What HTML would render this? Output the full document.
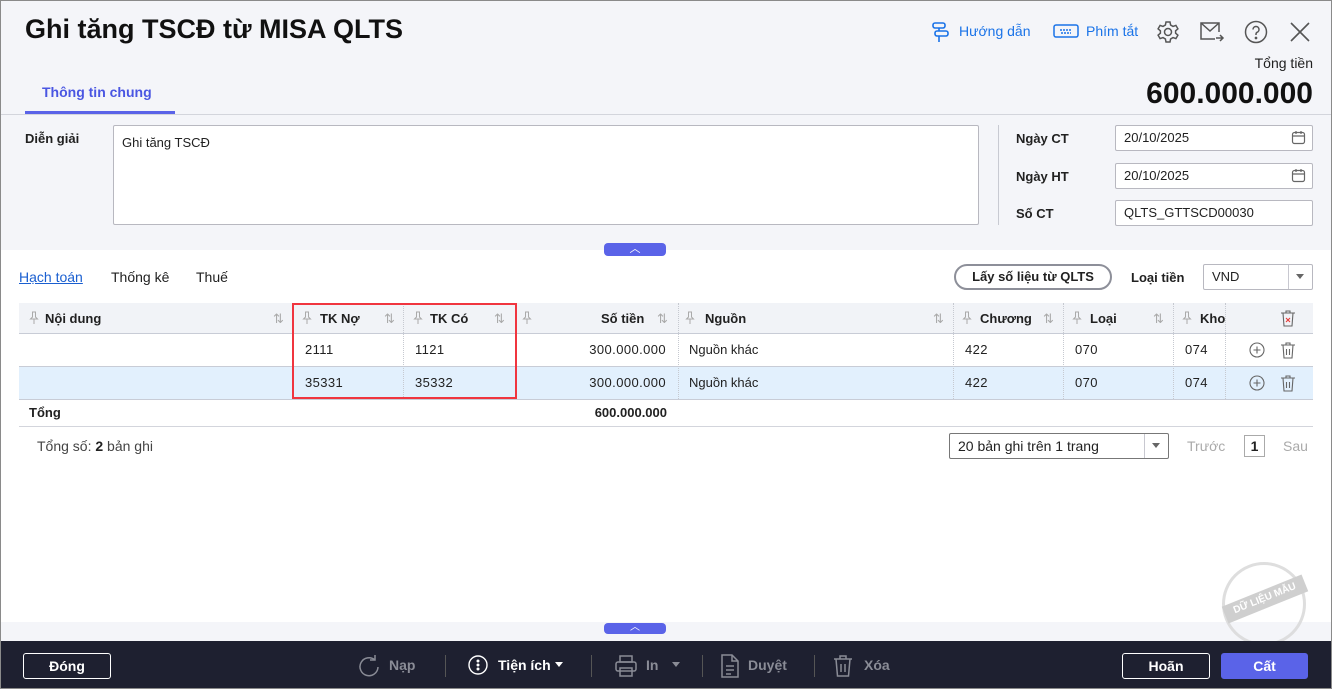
<!DOCTYPE html>
<html><head><meta charset="utf-8"><style>
*{box-sizing:border-box;margin:0;padding:0}
body{width:1332px;height:689px;overflow:hidden;font-family:"Liberation Sans",sans-serif;font-size:13px;color:#212121;background:#fff;position:relative}
.abs{position:absolute}
.frame{position:absolute;left:0;top:0;width:1332px;height:689px;border:1px solid #8a8a8a;pointer-events:none}
.hdr{left:0;top:0;width:1332px;height:250px;background:#f4f5f9}
.title{left:25px;top:14px;font-size:27px;font-weight:bold;color:#111}
.lnk{color:#1a73e8;font-size:14px}
.inp{background:#fff;border:1px solid #b8b8c0;border-radius:2px;font-size:13px;padding:0 8px}
.lbl{font-weight:bold;font-size:13px}
.th{top:303px;height:31px;background:#f1f3f7;border-bottom:1px solid #c8ccd6;font-weight:bold;font-size:13px;line-height:31px}
.cell{position:absolute;font-size:13px;line-height:32px}
.vl{position:absolute;width:0;border-left:1px dotted #c6c9d0}
.ft{left:0;top:641px;width:1332px;height:48px;background:#1e2030;color:#fff}
.btn{position:absolute;border:1px solid #fff;border-radius:3px;font-weight:bold;font-size:14px;text-align:center;line-height:24px;color:#fff}
.gray{color:#8a8c96}
.pin{position:absolute;top:311px}
</style></head><body>
<div class="abs hdr"></div>
<div class="abs title">Ghi tăng TSCĐ từ MISA QLTS</div>
<svg class="abs" style="left:930px;top:21px" width="20" height="22" viewBox="0 0 20 22" fill="none" stroke="#1a73e8" stroke-width="1.6"><rect x="3" y="2" width="12" height="5" rx="2"/><rect x="5" y="10" width="13" height="5" rx="2"/><path d="M9 7v3M9 15v6"/></svg>
<div class="abs lnk" style="left:959px;top:23px">Hướng dẫn</div>
<svg class="abs" style="left:1053px;top:24px" width="26" height="14" viewBox="0 0 26 14" fill="none" stroke="#1a73e8" stroke-width="1.5"><rect x="1" y="1" width="24" height="12" rx="2"/><path d="M7 6h12M8 9h10" stroke-dasharray="2 1"/></svg>
<div class="abs lnk" style="left:1086px;top:23px">Phím tắt</div>
<svg class="abs" style="left:1156px;top:20px" width="24" height="24" viewBox="0 0 24 24" fill="none" stroke="#555" stroke-width="1.5"><circle cx="12" cy="12" r="3.5"/><path d="M10 2h4l.6 3 2.4 1.4 2.9-1 2 3.4-2.3 2v2.4l2.3 2-2 3.4-2.9-1-2.4 1.4-.6 3h-4l-.6-3-2.4-1.4-2.9 1-2-3.4 2.3-2v-2.4l-2.3-2 2-3.4 2.9 1L9.4 5z"/></svg>
<svg class="abs" style="left:1199px;top:20px" width="26" height="24" viewBox="0 0 26 24" fill="none" stroke="#555" stroke-width="1.5"><path d="M20 12V3H2v16h14"/><path d="M2 3l9 8 9-8"/><path d="M17 18h7M21 15l3 3-3 3"/></svg>
<svg class="abs" style="left:1244px;top:20px" width="24" height="24" viewBox="0 0 24 24" fill="none" stroke="#555" stroke-width="1.5"><circle cx="12" cy="12" r="10.5"/><path d="M9 9.5a3 3 0 1 1 4 2.8c-.7.4-1 1-1 1.7v1"/><circle cx="12" cy="18" r=".6" fill="#555"/></svg>
<svg class="abs" style="left:1289px;top:21px" width="22" height="22" viewBox="0 0 22 22" stroke="#555" stroke-width="1.6"><path d="M2 2l18 18M20 2L2 20"/></svg>
<div class="abs" style="right:19px;top:55px;font-size:14px">Tổng tiền</div>
<div class="abs" style="right:19px;top:77px;font-size:30px;font-weight:bold;color:#111">600.000.000</div>
<div class="abs" style="left:42px;top:84px;font-size:14px;color:#4a56e2;font-weight:bold">Thông tin chung</div>
<div class="abs" style="left:25px;top:111px;width:150px;height:3px;background:#5a63e8"></div>
<div class="abs" style="left:0;top:114px;width:1332px;border-top:1px solid #d3d5dc"></div>
<div class="abs lbl" style="left:25px;top:131px">Diễn giải</div>
<div class="abs inp" style="left:113px;top:125px;width:866px;height:100px;padding-top:9px">Ghi tăng TSCĐ</div>
<div class="abs" style="left:998px;top:125px;height:100px;border-left:1px solid #c8cad2"></div>
<div class="abs lbl" style="left:1016px;top:131px">Ngày CT</div>
<div class="abs lbl" style="left:1016px;top:169px">Ngày HT</div>
<div class="abs lbl" style="left:1016px;top:206px">Số CT</div>
<div class="abs inp" style="left:1115px;top:125px;width:198px;height:26px;line-height:24px">20/10/2025</div>
<div class="abs inp" style="left:1115px;top:163px;width:198px;height:26px;line-height:24px">20/10/2025</div>
<div class="abs inp" style="left:1115px;top:200px;width:198px;height:26px;line-height:24px">QLTS_GTTSCD00030</div>
<svg class="abs" style="left:1291px;top:130px" width="15" height="15" viewBox="0 0 15 15" fill="none" stroke="#666" stroke-width="1.2"><rect x="1.5" y="2.5" width="12" height="11" rx="2"/><path d="M1.5 6h12M5 1v3M10 1v3"/></svg>
<svg class="abs" style="left:1291px;top:168px" width="15" height="15" viewBox="0 0 15 15" fill="none" stroke="#666" stroke-width="1.2"><rect x="1.5" y="2.5" width="12" height="11" rx="2"/><path d="M1.5 6h12M5 1v3M10 1v3"/></svg>
<div class="abs" style="left:604px;top:243px;width:62px;height:13px;background:#5a63e8;border-radius:4px;color:#fff;text-align:center;font-size:11px;line-height:12px">︿</div>

<div class="abs" style="left:19px;top:269px;font-size:14px;color:#1a5fd0;text-decoration:underline">Hạch toán</div>
<div class="abs" style="left:111px;top:269px;font-size:14px">Thống kê</div>
<div class="abs" style="left:196px;top:269px;font-size:14px">Thuế</div>
<div class="abs" style="left:954px;top:264px;width:158px;height:26px;border:2px solid #8d8f99;border-radius:14px;text-align:center;line-height:22px;font-weight:bold;font-size:13px">Lấy số liệu từ QLTS</div>
<div class="abs lbl" style="left:1131px;top:270px">Loại tiền</div>
<div class="abs inp" style="left:1203px;top:264px;width:110px;height:26px;line-height:24px">VND</div>
<div class="abs" style="left:1288px;top:265px;height:24px;border-left:1px solid #c8c8d0"></div>
<div class="abs" style="left:1296px;top:274px;border:4px solid transparent;border-top:5px solid #666"></div>

<div class="abs th" style="left:19px;width:1294px"></div>
<div class="abs" style="left:19px;top:367px;width:1294px;height:33px;background:#e2f0fd"></div>
<div class="abs" style="left:19px;top:366px;width:1294px;border-top:1px solid #c8ccd6"></div>
<div class="abs" style="left:19px;top:399px;width:1294px;border-top:1px solid #c8ccd6"></div>
<div class="abs" style="left:19px;top:426px;width:1294px;border-top:1px solid #d3d5dc"></div>
<div class="vl" style="left:403px;top:303px;height:96px"></div>
<div class="vl" style="left:515px;top:303px;height:96px"></div>
<div class="vl" style="left:678px;top:303px;height:96px"></div>
<div class="vl" style="left:953px;top:303px;height:96px"></div>
<div class="vl" style="left:1063px;top:303px;height:96px"></div>
<div class="vl" style="left:1173px;top:303px;height:96px"></div>
<div class="vl" style="left:1225px;top:303px;height:96px"></div>
<div class="abs" style="left:292px;top:303px;width:225px;height:96px;border:2px solid #f0353f"></div>
<svg class="pin" style="left:29px" width="10" height="14" viewBox="0 0 10 14" fill="none" stroke="#aaa" stroke-width="1"><path d="M3 1h4M3.5 1v5L1.5 8h7L6.5 6V1M5 8v5"/></svg>
<svg class="pin" style="left:302px" width="10" height="14" viewBox="0 0 10 14" fill="none" stroke="#aaa" stroke-width="1"><path d="M3 1h4M3.5 1v5L1.5 8h7L6.5 6V1M5 8v5"/></svg>
<svg class="pin" style="left:413px" width="10" height="14" viewBox="0 0 10 14" fill="none" stroke="#aaa" stroke-width="1"><path d="M3 1h4M3.5 1v5L1.5 8h7L6.5 6V1M5 8v5"/></svg>
<svg class="pin" style="left:522px" width="10" height="14" viewBox="0 0 10 14" fill="none" stroke="#aaa" stroke-width="1"><path d="M3 1h4M3.5 1v5L1.5 8h7L6.5 6V1M5 8v5"/></svg>
<svg class="pin" style="left:685px" width="10" height="14" viewBox="0 0 10 14" fill="none" stroke="#aaa" stroke-width="1"><path d="M3 1h4M3.5 1v5L1.5 8h7L6.5 6V1M5 8v5"/></svg>
<svg class="pin" style="left:962px" width="10" height="14" viewBox="0 0 10 14" fill="none" stroke="#aaa" stroke-width="1"><path d="M3 1h4M3.5 1v5L1.5 8h7L6.5 6V1M5 8v5"/></svg>
<svg class="pin" style="left:1072px" width="10" height="14" viewBox="0 0 10 14" fill="none" stroke="#aaa" stroke-width="1"><path d="M3 1h4M3.5 1v5L1.5 8h7L6.5 6V1M5 8v5"/></svg>
<svg class="pin" style="left:1182px" width="10" height="14" viewBox="0 0 10 14" fill="none" stroke="#aaa" stroke-width="1"><path d="M3 1h4M3.5 1v5L1.5 8h7L6.5 6V1M5 8v5"/></svg>
<div class="cell" style="left:45px;top:303px;font-weight:bold;line-height:31px">Nội dung</div>
<div class="cell" style="left:273px;top:303px;color:#aaa;line-height:31px">⇅</div>
<div class="cell" style="left:320px;top:303px;font-weight:bold;line-height:31px">TK Nợ</div>
<div class="cell" style="left:384px;top:303px;color:#aaa;line-height:31px">⇅</div>
<div class="cell" style="left:430px;top:303px;font-weight:bold;line-height:31px">TK Có</div>
<div class="cell" style="left:494px;top:303px;color:#aaa;line-height:31px">⇅</div>
<div class="cell" style="left:601px;top:303px;font-weight:bold;line-height:31px">Số tiền</div>
<div class="cell" style="left:657px;top:303px;color:#aaa;line-height:31px">⇅</div>
<div class="cell" style="left:705px;top:303px;font-weight:bold;line-height:31px">Nguồn</div>
<div class="cell" style="left:933px;top:303px;color:#aaa;line-height:31px">⇅</div>
<div class="cell" style="left:980px;top:303px;font-weight:bold;line-height:31px">Chương</div>
<div class="cell" style="left:1043px;top:303px;color:#aaa;line-height:31px">⇅</div>
<div class="cell" style="left:1090px;top:303px;font-weight:bold;line-height:31px">Loại</div>
<div class="cell" style="left:1153px;top:303px;color:#aaa;line-height:31px">⇅</div>
<div class="cell" style="left:1200px;top:303px;font-weight:bold;line-height:31px">Kho</div>
<svg class="abs" style="left:1280px;top:309px" width="16" height="18" viewBox="0 0 16 18" fill="none" stroke="#666" stroke-width="1.1"><path d="M1 4h14M6 4V2h4v2M3 4l1 13h8l1-13"/><path d="M6 9l4 4M10 9l-4 4" stroke="#e53935"/></svg>

<div class="cell" style="left:305px;top:334px;letter-spacing:.4px">2111</div>
<div class="cell" style="left:415px;top:334px;letter-spacing:.4px">1121</div>
<div class="cell" style="right:666px;top:334px;letter-spacing:.4px">300.000.000</div>
<div class="cell" style="left:689px;top:334px">Nguồn khác</div>
<div class="cell" style="left:965px;top:334px;letter-spacing:.4px">422</div>
<div class="cell" style="left:1075px;top:334px;letter-spacing:.4px">070</div>
<div class="cell" style="left:1185px;top:334px;letter-spacing:.4px">074</div>
<div class="cell" style="left:305px;top:367px;letter-spacing:.4px">35331</div>
<div class="cell" style="left:415px;top:367px;letter-spacing:.4px">35332</div>
<div class="cell" style="right:666px;top:367px;letter-spacing:.4px">300.000.000</div>
<div class="cell" style="left:689px;top:367px">Nguồn khác</div>
<div class="cell" style="left:965px;top:367px;letter-spacing:.4px">422</div>
<div class="cell" style="left:1075px;top:367px;letter-spacing:.4px">070</div>
<div class="cell" style="left:1185px;top:367px;letter-spacing:.4px">074</div>
<svg class="abs" style="left:1249px;top:342px" width="16" height="16" viewBox="0 0 16 16" fill="none" stroke="#666" stroke-width="1.1"><circle cx="8" cy="8" r="7"/><path d="M8 4.5v7M4.5 8h7"/></svg>
<svg class="abs" style="left:1249px;top:375px" width="16" height="16" viewBox="0 0 16 16" fill="none" stroke="#666" stroke-width="1.1"><circle cx="8" cy="8" r="7"/><path d="M8 4.5v7M4.5 8h7"/></svg>
<svg class="abs" style="left:1280px;top:341px" width="16" height="18" viewBox="0 0 16 18" fill="none" stroke="#666" stroke-width="1.1"><path d="M1 4h14M6 4V2h4v2M3 4l1 13h8l1-13M6.5 8v6M9.5 8v6"/></svg>
<svg class="abs" style="left:1280px;top:374px" width="16" height="18" viewBox="0 0 16 18" fill="none" stroke="#666" stroke-width="1.1"><path d="M1 4h14M6 4V2h4v2M3 4l1 13h8l1-13M6.5 8v6M9.5 8v6"/></svg>
<div class="cell" style="left:29px;top:399px;font-weight:bold;line-height:28px">Tổng</div>
<div class="cell" style="right:665px;top:399px;font-weight:bold;line-height:28px">600.000.000</div>
<div class="abs" style="left:37px;top:438px;font-size:14px;color:#444">Tổng số: <b style="color:#222">2</b> bản ghi</div>
<div class="abs inp" style="left:949px;top:433px;width:220px;height:26px;line-height:24px;border-color:#777;font-size:14px">20 bản ghi trên 1 trang</div>
<div class="abs" style="left:1144px;top:434px;height:24px;border-left:1px solid #c8c8d0"></div>
<div class="abs" style="left:1152px;top:443px;border:4px solid transparent;border-top:5px solid #666"></div>
<div class="abs" style="left:1187px;top:438px;font-size:14px;color:#aaa">Trước</div>
<div class="abs" style="left:1244px;top:435px;width:21px;height:22px;border:1px solid #aaa;text-align:center;line-height:20px;font-weight:bold;font-size:14px">1</div>
<div class="abs" style="left:1283px;top:438px;font-size:14px;color:#aaa">Sau</div>

<div class="abs" style="left:0;top:622px;width:1332px;height:19px;background:#f4f5f9"></div>
<div class="abs" style="left:604px;top:623px;width:62px;height:11px;background:#5a63e8;border-radius:4px;color:#fff;text-align:center;font-size:10px;line-height:10px">︿</div>
<div class="abs" style="left:1222px;top:562px;width:84px;height:84px;border:3px solid #dadada;border-radius:50%;opacity:.9"></div>
<div class="abs" style="left:1222px;top:590px;width:86px;height:18px;background:#cfcfcf;color:#fff;font-size:10px;font-weight:bold;text-align:center;line-height:18px;transform:rotate(-22deg)">DỮ LIỆU MẪU</div>
<div class="abs ft"></div>
<div class="btn" style="left:23px;top:653px;width:88px;height:26px">Đóng</div>
<svg class="abs" style="left:358px;top:654px" width="22" height="24" viewBox="0 0 22 24" fill="none" stroke="#8a8c96" stroke-width="1.5"><path d="M17 6A9 9 0 1 0 20 13"/><path d="M17 1v5h-5"/></svg>
<div class="abs gray" style="left:389px;top:657px;font-size:14px;font-weight:bold">Nạp</div>
<div class="abs" style="left:445px;top:655px;height:22px;border-left:1px solid #555"></div>
<svg class="abs" style="left:468px;top:655px" width="20" height="20" viewBox="0 0 20 20" fill="none" stroke="#fff" stroke-width="1.4"><circle cx="10" cy="10" r="9"/><circle cx="10" cy="6" r=".8" fill="#fff"/><circle cx="10" cy="10" r=".8" fill="#fff"/><circle cx="10" cy="14" r=".8" fill="#fff"/></svg>
<div class="abs" style="left:498px;top:657px;font-size:14px;font-weight:bold;color:#fff">Tiện ích</div>
<div class="abs" style="left:555px;top:662px;border:4px solid transparent;border-top:5px solid #fff"></div>
<div class="abs" style="left:591px;top:655px;height:22px;border-left:1px solid #555"></div>
<svg class="abs" style="left:615px;top:654px" width="22" height="24" viewBox="0 0 22 24" fill="none" stroke="#8a8c96" stroke-width="1.5"><rect x="5" y="2" width="12" height="6"/><rect x="1" y="8" width="20" height="9" rx="2"/><rect x="5" y="14" width="12" height="8"/></svg>
<div class="abs gray" style="left:646px;top:657px;font-size:14px;font-weight:bold">In</div>
<div class="abs" style="left:672px;top:662px;border:4px solid transparent;border-top:5px solid #8a8c96"></div>
<div class="abs" style="left:702px;top:655px;height:22px;border-left:1px solid #555"></div>
<svg class="abs" style="left:721px;top:654px" width="18" height="24" viewBox="0 0 18 24" fill="none" stroke="#8a8c96" stroke-width="1.5"><path d="M1 1h10l6 6v16H1z"/><path d="M11 1v6h6M5 12h8M5 16h8M5 20h5"/></svg>
<div class="abs gray" style="left:748px;top:657px;font-size:14px;font-weight:bold">Duyệt</div>
<div class="abs" style="left:814px;top:655px;height:22px;border-left:1px solid #555"></div>
<svg class="abs" style="left:833px;top:654px" width="20" height="24" viewBox="0 0 20 24" fill="none" stroke="#8a8c96" stroke-width="1.5"><path d="M1 5h18M7 5V2h6v3M3 5l1.5 17h11L17 5M8 10v8M12 10v8"/></svg>
<div class="abs gray" style="left:864px;top:657px;font-size:14px;font-weight:bold">Xóa</div>
<div class="btn" style="left:1122px;top:653px;width:88px;height:26px">Hoãn</div>
<div class="btn" style="left:1221px;top:653px;width:87px;height:26px;background:#5a63e8;border-color:#5a63e8">Cất</div>
<div class="frame"></div>
</body></html>
